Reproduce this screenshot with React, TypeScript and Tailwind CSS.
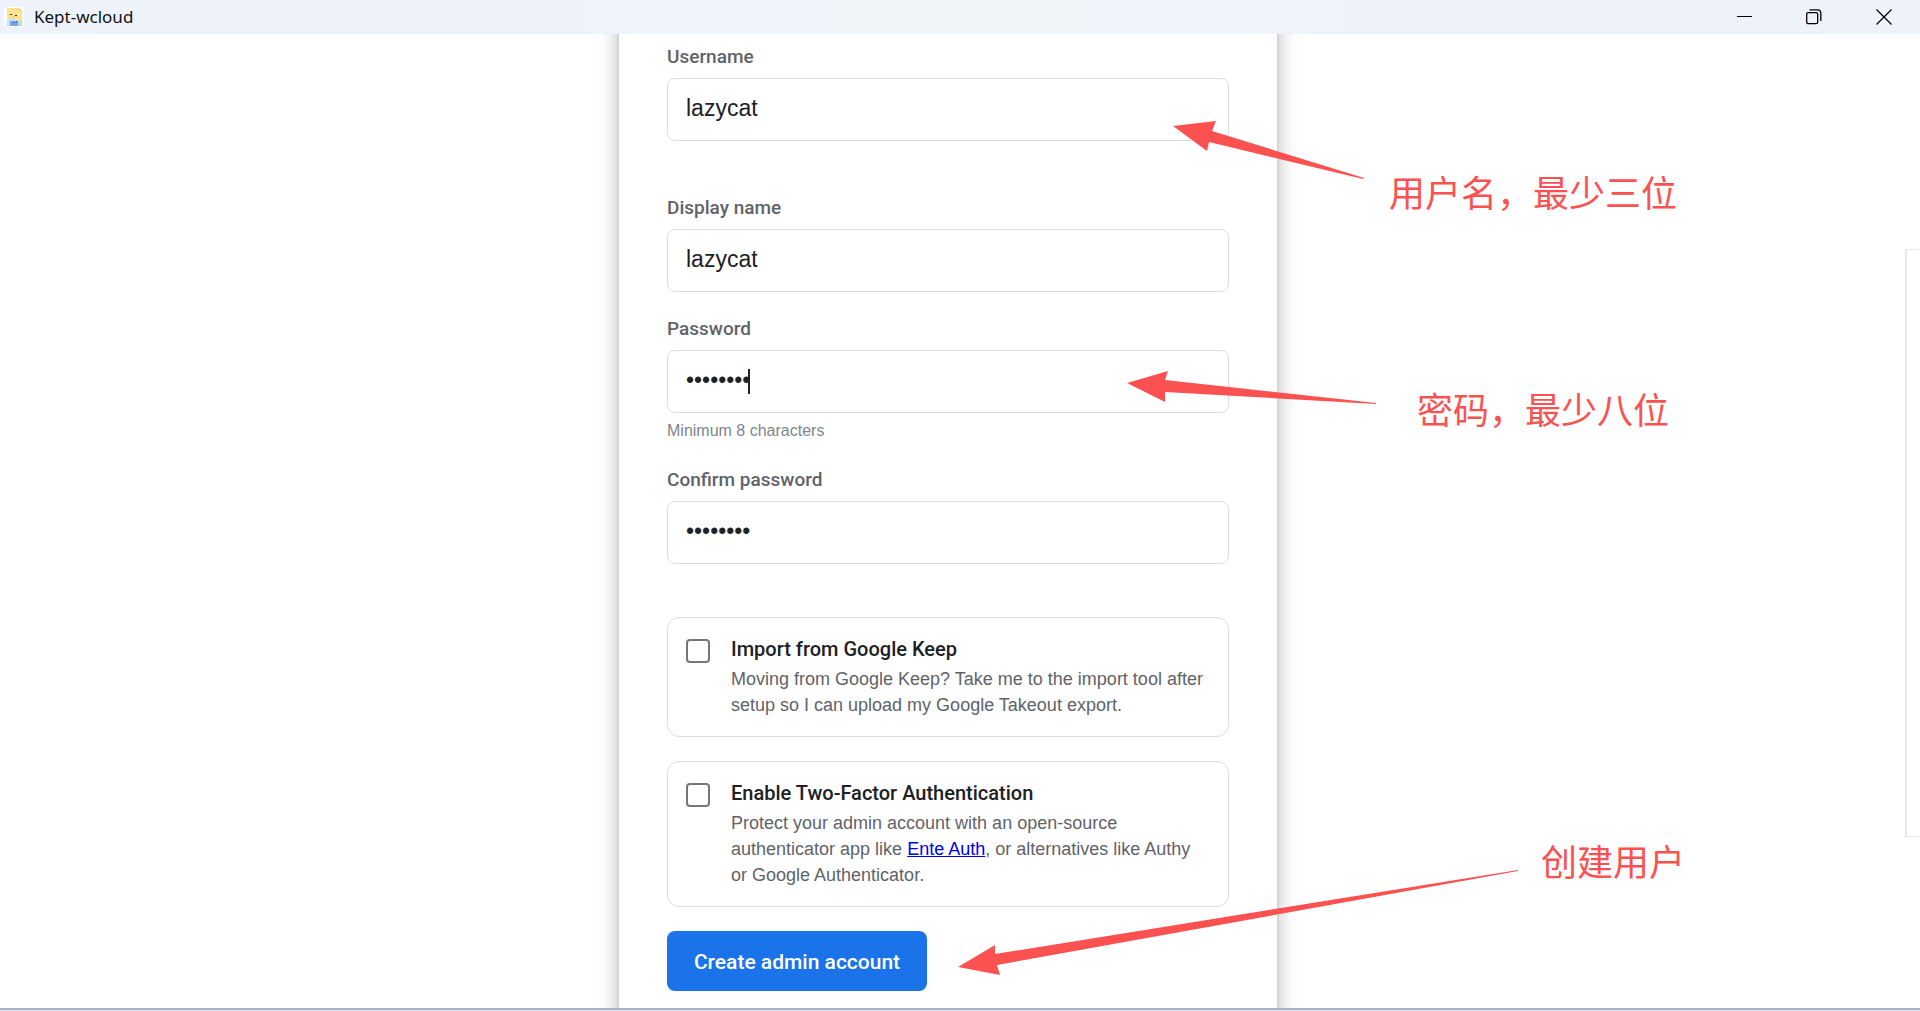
import type { ReactNode } from "react";

const arrows = [
  "1173,126 1216,121 1212,131 1364,178 1363,179 1209,142 1207,151",
  "1127,383 1168,371 1165,380 1376,403 1376,404 1165,392 1165,402",
  "958,967 995,945 995,954 1518,870 1518,871 997,965 1000,975",
];

function TitleBar() {
  return (
    <header className="flex h-[34px] shrink-0 items-center justify-between bg-linear-to-r from-[#eef2fa] via-[#eef4f8] to-[#eef2fa]">
      <div className="flex items-center gap-[10px] pl-1">
        <svg width="20" height="20" viewBox="0 0 20 20" aria-hidden="true">
          <rect width="20" height="20" rx="4" fill="#fff" />
          <path d="M3 1h11l4 4v14H3z" fill="#fde293" />
          <path d="M13 1h2l3 3v2z" fill="#fbcf63" />
          <path d="M6 7h2v1H6zM11 8h2v1h-2z" fill="#3c3226" />
          <path d="M9 9h1v1H9z" fill="#f19a7a" />
          <path d="M14 7h2v1h-2z" fill="#fff3c4" />
          <path d="M2 19c0-5 3-8 6-8 2 0 3 1 4 2 3 0 6 2 6 6z" fill="#c5e6f5" />
          <path d="M6 14h8v5H6z" fill="#7fa3e6" />
          <path d="M9 15h2v1H9zM12 14h1v2h-1z" fill="#4f74c8" />
          <path d="M14 15h3v3h-3" fill="none" stroke="#9fdcd0" />
        </svg>
        <h1 className="font-['Noto_Sans'] text-[17px] leading-6 text-[#111]">Kept-wcloud</h1>
      </div>
      <div className="flex h-full">
        <button aria-label="Minimize" className="flex w-[69px] items-center justify-center">
          <svg width="16" height="16" viewBox="0 0 16 16" fill="none" stroke="#000">
            <path d="M0 7.500h15" />
          </svg>
        </button>
        <button aria-label="Restore" className="flex w-[69px] items-center justify-center">
          <svg width="16" height="16" viewBox="0 0 16 16" fill="none" stroke="#000" strokeWidth="1.300">
            <rect x="0.700" y="3.700" width="11" height="11" rx="1.500" />
            <path d="M3.500 0.800h8a3.300 3.300 0 0 1 3.300 3.300v8" />
          </svg>
        </button>
        <button aria-label="Close" className="flex w-[72px] items-center justify-center">
          <svg width="16" height="16" viewBox="0 0 16 16" fill="none" stroke="#000" strokeWidth="1.300">
            <path d="M0.500 0.500l15 15M15.500 0.500l-15 15" />
          </svg>
        </button>
      </div>
    </header>
  );
}

type FieldProps = {
  id: string;
  label: string;
  value: string;
  type?: string;
  focused?: boolean;
};

function Field({ id, label, value, type = "text", focused }: FieldProps) {
  return (
    <div className="flex flex-col gap-[9px]">
      <label htmlFor={id} className="font-[Roboto] text-[19px] leading-6 font-medium text-[#5f6368]">
        {label}
      </label>
      <div className="relative">
        <input
          id={id}
          type={type}
          defaultValue={value}
          className="block h-[63px] w-full rounded-lg border border-[#dadce0] bg-white px-[18px] pb-[2px] text-[23px] text-[#202124] outline-none"
        />
        {focused && <span className="absolute top-[19px] left-[81px] h-[25px] w-[2px] bg-[#202124]" />}
      </div>
    </div>
  );
}

type OptionProps = {
  id: string;
  title: string;
  children: ReactNode;
};

function Option({ id, title, children }: OptionProps) {
  return (
    <div className="flex gap-[21px] rounded-xl border border-[#dadce0] p-[18px]">
      <input
        id={id}
        type="checkbox"
        className="mt-[3px] size-6 shrink-0 appearance-none rounded-[4px] border-2 border-[#767676] bg-white"
      />
      <div>
        <label htmlFor={id} className="mb-1 block font-[Roboto] text-[20px] leading-[26px] font-medium text-[#202124]">
          {title}
        </label>
        <p className="text-[18px] leading-[26px] text-[#5f6368]">{children}</p>
      </div>
    </div>
  );
}

function Note({ className, children }: { className: string; children: ReactNode }) {
  return (
    <p
      className={`absolute font-['Noto_Sans_CJK_SC',sans-serif] text-[36px] leading-[44px] whitespace-nowrap text-[#fb5151] ${className}`}
    >
      {children}
    </p>
  );
}

function App() {
  return (
    <div className="relative flex min-h-screen flex-col overflow-hidden bg-white font-['Liberation_Sans',Arial,sans-serif]">
      <TitleBar />

      <div className="flex flex-1">
        <main className="flex flex-1 justify-center overflow-hidden">
          {/* the card runs past both edges of the window, as if scrolled */}
          <form className="-my-6 flex w-[662px] flex-col border-x-2 border-[#d3d6d6] bg-white px-12 pt-[35px] pb-[41px] shadow-[0_0_18px_rgba(0,0,0,0.24)]">
            <Field id="username" label="Username" value="lazycat" />
            <div className="mt-[55px]">
              <Field id="display-name" label="Display name" value="lazycat" />
            </div>
            <div className="mt-[25px]">
              <Field id="password" label="Password" value="12345678" type="password" focused />
            </div>
            <p className="mt-[6px] text-[16px] leading-6 text-[#80868b]">Minimum 8 characters</p>
            <div className="mt-[25px]">
              <Field id="confirm" label="Confirm password" value="12345678" type="password" />
            </div>

            <div className="mt-[53px] flex flex-col gap-6">
              <Option id="import" title="Import from Google Keep">
                Moving from Google Keep? Take me to the import tool after setup so I can upload my Google Takeout export.
              </Option>
              <Option id="two-factor" title="Enable Two-Factor Authentication">
                Protect your admin account with an open-source authenticator app like{" "}
                <a href="#ente" className="text-[#0000ee] underline">
                  Ente Auth
                </a>
                , or alternatives like Authy or Google Authenticator.
              </Option>
            </div>

            <button
              type="button"
              className="mt-6 h-[60px] w-[260px] rounded-lg bg-[#1a73e8] pt-1 font-[Roboto] text-[21px] font-medium text-white"
            >
              Create admin account
            </button>
          </form>
        </main>
        <aside className="flex w-6 justify-end pt-[215px]">
          <div className="h-[588px] w-[15px] border-y border-l-2 border-[#e8e8e8]" />
        </aside>
      </div>

      <footer className="h-[3px] shrink-0 border-t-2 border-[#abb3c4] bg-[#dfe5ef]" />

      {/* hand-drawn notes over the form */}
      <svg className="pointer-events-none absolute inset-0 size-full" fill="#fb5151" aria-hidden="true">
        {arrows.map((points) => (
          <polygon key={points} points={points} />
        ))}
      </svg>
      <Note className="top-[169px] left-[1389px]">用户名，最少三位</Note>
      <Note className="top-[386px] left-[1417px]">密码，最少八位</Note>
      <Note className="top-[838px] left-[1541px]">创建用户</Note>
    </div>
  );
}

export default App;
